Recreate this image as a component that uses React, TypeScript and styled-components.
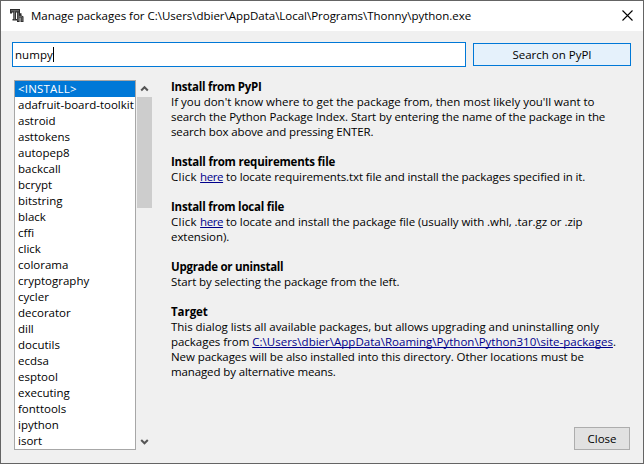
import React from 'react';
import styled, { createGlobalStyle } from 'styled-components';

const GlobalStyle = createGlobalStyle`
  html, body, #root { height: 100%; margin: 0; }
  body { overflow: hidden; }
  * { box-sizing: border-box; }
`;

const Dialog = styled.div`
  width: 644px;
  height: 464px;
  display: flex;
  flex-direction: column;
  border: 1px solid #646464;
  background: #f0f0f0;
  color: #000;
  font: 11.5px/15px "Open Sans", "Noto Sans", sans-serif;
`;

const TitleBar = styled.header`
  height: 30px;
  flex: none;
  display: flex;
  align-items: center;
  background: #fff;
  padding: 0 10px 0 9px;
`;

const AppIcon = styled.svg`
  width: 14px;
  height: 14px;
  flex: none;
  margin-right: 7px;
`;

const Title = styled.h1<{ $spacing: number }>`
  flex: 1;
  margin: 0;
  padding-bottom: 2px;
  font: inherit;
  white-space: nowrap;
  letter-spacing: ${(p) => p.$spacing}px;
`;

const CloseIcon = styled.svg`
  width: 11px;
  height: 11px;
  flex: none;
  margin-bottom: 1px;
`;

const SearchRow = styled.div`
  display: flex;
  align-items: center;
  gap: 7px;
  padding: 11px 12px 0 11px;
`;

const SearchField = styled.div`
  width: 454px;
  height: 25px;
  display: flex;
  align-items: center;
  padding-left: 2px;
  border: 1px solid #0078d7;
  background: #fff;
`;

const Caret = styled.span`
  width: 1px;
  height: 15px;
  background: #000;
`;

const Button = styled.button<{ $active?: boolean; $width: number }>`
  width: ${(p) => p.$width}px;
  height: 23px;
  padding: 0 0 1px;
  border: 1px solid ${(p) => (p.$active ? '#0078d7' : '#adadad')};
  background: ${(p) => (p.$active ? '#e5f1fb' : '#e1e1e1')};
  color: #000;
  font: inherit;
`;

const Content = styled.main`
  flex: 1;
  min-height: 0;
  display: flex;
  padding: 13px 13px;
`;

const PackageList = styled.ul`
  width: 122px;
  height: 370px;
  flex: none;
  margin: 0;
  padding: 0;
  list-style: none;
  overflow: hidden;
  border: 1px solid #a7a7a7;
  background: #fff;
`;

const PackageItem = styled.li<{ $selected: boolean }>`
  height: 16px;
  padding-left: 3px;
  line-height: 16px;
  white-space: nowrap;
  background: ${(p) => (p.$selected ? '#0078d7' : 'transparent')};
  color: ${(p) => (p.$selected ? '#fff' : '#000')};
  letter-spacing: ${(p) => (p.$selected ? 0.2 : 0)}px;
`;

const ScrollBar = styled.div`
  width: 17px;
  height: 370px;
  flex: none;
  display: flex;
  flex-direction: column;
  align-items: center;
  justify-content: space-between;
`;

const ScrollArrow = styled.svg`
  width: 17px;
  height: 17px;
  flex: none;
`;

const ScrollThumb = styled.div`
  width: 15px;
  height: 111px;
  margin-bottom: auto;
  background: #cdcdcd;
`;

const Details = styled.div`
  flex: 1;
  display: flex;
  flex-direction: column;
  padding-left: 18px;
`;

const Sections = styled.div`
  flex: 1;
  display: flex;
  flex-direction: column;
  gap: 15px;
  margin-top: -1px;
`;

const Section = styled.section`
  display: flex;
  flex-direction: column;
`;

const Heading = styled.h2<{ $spacing: number }>`
  margin: 0;
  font: inherit;
  font-weight: 700;
  white-space: nowrap;
  letter-spacing: ${(p) => p.$spacing}px;
`;

const Line = styled.div`
  height: 15px;
  white-space: pre;
`;

const Run = styled.span<{ $spacing: number }>`
  letter-spacing: ${(p) => p.$spacing}px;
`;

const Link = styled.a<{ $spacing: number }>`
  color: #00008b;
  letter-spacing: ${(p) => p.$spacing}px;
  text-decoration: underline;
  text-decoration-thickness: 1px;
  text-underline-offset: 1px;
  text-decoration-skip-ink: none;
`;

const Footer = styled.footer`
  display: flex;
  justify-content: flex-end;
`;

const packages = [
  '<INSTALL>', 'adafruit-board-toolkit', 'astroid', 'asttokens', 'autopep8', 'backcall',
  'bcrypt', 'bitstring', 'black', 'cffi', 'click', 'colorama', 'cryptography', 'cycler',
  'decorator', 'dill', 'docutils', 'ecdsa', 'esptool', 'executing', 'fonttools', 'ipython', 'isort',
];

type Part = { text: string; spacing: number; link?: boolean };

const sections: { title: string; spacing: number; lines: Part[][] }[] = [
  {
    title: 'Install from PyPI',
    spacing: -0.26,
    lines: [
      [{ text: "If you don't know where to get the package from, then most likely you'll want to", spacing: -0.015 }],
      [{ text: 'search the Python Package Index. Start by entering the name of the package in the', spacing: -0.085 }],
      [{ text: 'search box above and pressing ENTER.', spacing: -0.12 }],
    ],
  },
  {
    title: 'Install from requirements file',
    spacing: -0.2,
    lines: [
      [
        { text: 'Click ', spacing: 0.25 },
        { text: 'here', spacing: -0.417, link: true },
        { text: ' to locate requirements.txt file and install the packages specified in it.', spacing: -0.1 },
      ],
    ],
  },
  {
    title: 'Install from local file',
    spacing: -0.23,
    lines: [
      [
        { text: 'Click ', spacing: 0.25 },
        { text: 'here', spacing: -0.417, link: true },
        { text: ' to locate and install the package file (usually with .whl, .tar.gz or .zip', spacing: -0.057 },
      ],
      [{ text: 'extension).', spacing: -0.06 }],
    ],
  },
  {
    title: 'Upgrade or uninstall',
    spacing: -0.28,
    lines: [[{ text: 'Start by selecting the package from the left.', spacing: -0.085 }]],
  },
  {
    title: 'Target',
    spacing: -0.05,
    lines: [
      [{ text: 'This dialog lists all available packages, but allows upgrading and uninstalling only', spacing: -0.04 }],
      [
        { text: 'packages from ', spacing: -0.03 },
        { text: 'C:\\Users\\dbier\\AppData\\Roaming\\Python\\Python310\\site-packages', spacing: 0.015, link: true },
        { text: '.', spacing: 0 },
      ],
      [{ text: 'New packages will be also installed into this directory. Other locations must be', spacing: -0.08 }],
      [{ text: 'managed by alternative means.', spacing: -0.12 }],
    ],
  },
];

export default function App() {
  return (
    <>
      <GlobalStyle />
      <Dialog>
        <TitleBar>
          <AppIcon viewBox="0 0 14 14" aria-hidden="true">
            <path d="M0 0h10v4.2h1.5v2.2l2 1.2v5.4h-3V8.5H9.6V13H7V3.6H6v6.4h1v1.6H2.5V10h.8V3.6H2v1H0z" fill="#2b2b2b" />
            <path d="M1 1.8h8M4.6 2.5v8M8.2 3.5v8.5M9 7.3h2.2l.9.9v4" fill="none" stroke="#8c8c8c" strokeWidth="0.8" />
          </AppIcon>
          <Title $spacing={-0.02}>
            {'Manage packages for C:\\Users\\dbier\\AppData\\Local\\Programs\\Thonny\\python.exe'}
          </Title>
          <CloseIcon viewBox="0 0 11 11" aria-label="Close window">
            <path d="M.5.5l10 10M10.5.5l-10 10" fill="none" stroke="#000" strokeWidth="1.1" />
          </CloseIcon>
        </TitleBar>
        <SearchRow>
          <SearchField>
            <Run $spacing={0.05}>numpy</Run>
            <Caret />
          </SearchField>
          <Button $active $width={158}>Search on PyPI</Button>
        </SearchRow>
        <Content>
          <PackageList>
            {packages.map((name, i) => (
              <PackageItem key={name} $selected={i === 0}>{name}</PackageItem>
            ))}
          </PackageList>
          <ScrollBar>
            <ScrollArrow viewBox="0 0 17 17" aria-hidden="true">
              <path d="M5.2 10.5l3.3-3.3 3.3 3.3" fill="none" stroke="#555" strokeWidth="2" />
            </ScrollArrow>
            <ScrollThumb />
            <ScrollArrow viewBox="0 0 17 17" aria-hidden="true">
              <path d="M5.2 7l3.3 3.3L11.8 7" fill="none" stroke="#555" strokeWidth="2" />
            </ScrollArrow>
          </ScrollBar>
          <Details>
            <Sections>
              {sections.map((section) => (
                <Section key={section.title}>
                  <Heading $spacing={section.spacing}>{section.title}</Heading>
                  {section.lines.map((line, i) => (
                    <Line key={i}>
                      {line.map((part) =>
                        part.link ? (
                          <Link key={part.text} $spacing={part.spacing}>{part.text}</Link>
                        ) : (
                          <Run key={part.text} $spacing={part.spacing}>{part.text}</Run>
                        ),
                      )}
                    </Line>
                  ))}
                </Section>
              ))}
            </Sections>
            <Footer>
              <Button $width={56}>Close</Button>
            </Footer>
          </Details>
        </Content>
      </Dialog>
    </>
  );
}
